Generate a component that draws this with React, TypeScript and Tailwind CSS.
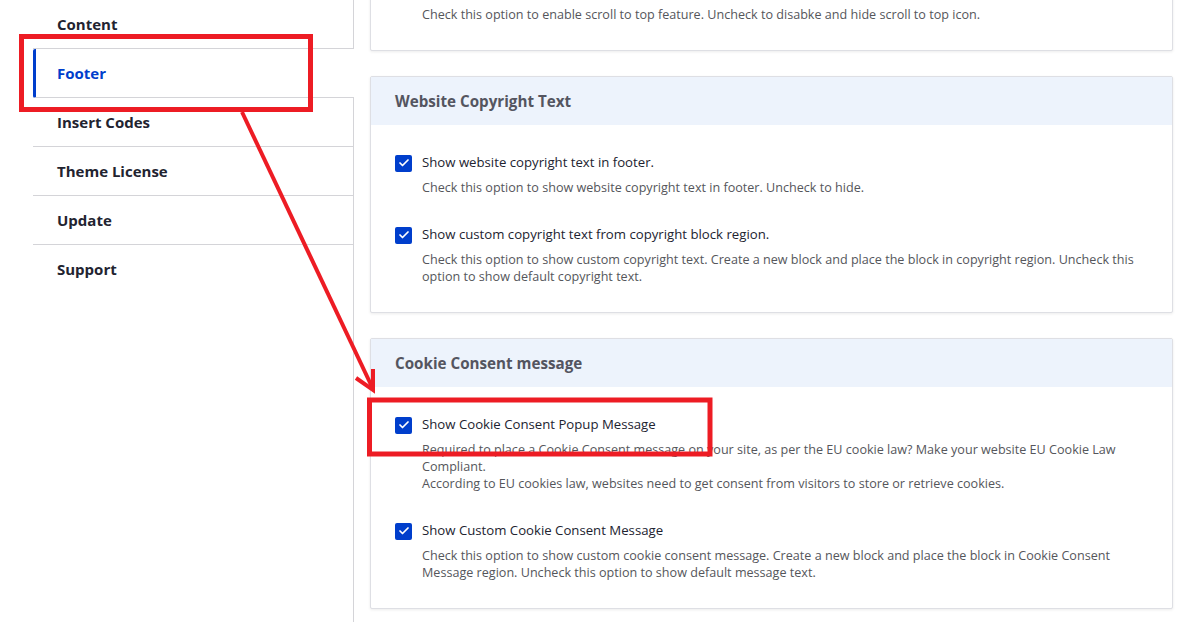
import { Check } from "lucide-react";

const navItems = ["Content", "Footer", "Insert Codes", "Theme License", "Update", "Support"];

type Option = {
  label: string;
  desc: React.ReactNode;
};

const copyrightOptions: Option[] = [
  {
    label: "Show website copyright text in footer.",
    desc: "Check this option to show website copyright text in footer. Uncheck to hide.",
  },
  {
    label: "Show custom copyright text from copyright block region.",
    desc: "Check this option to show custom copyright text. Create a new block and place the block in copyright region. Uncheck this option to show default copyright text.",
  },
];

const cookieOptions: Option[] = [
  {
    label: "Show Cookie Consent Popup Message",
    desc: (
      <>
        Required to place a Cookie Consent message on your site, as per the EU cookie law? Make your website EU Cookie Law
        Compliant.
        <br />
        According to EU cookies law, websites need to get consent from visitors to store or retrieve cookies.
      </>
    ),
  },
  {
    label: "Show Custom Cookie Consent Message",
    desc: "Check this option to show custom cookie consent message. Create a new block and place the block in Cookie Consent Message region. Uncheck this option to show default message text.",
  },
];

function OptionRow({ option, first }: { option: Option; first: boolean }) {
  return (
    <div className={first ? "" : "mt-[29px]"}>
      <label className="flex h-[20px] items-center gap-[10px] text-[13.2px] text-[#222330]">
        <span className="flex h-[17px] w-[17px] flex-none items-center justify-center rounded-[2px] bg-[#003ecc]">
          <Check className="h-[12px] w-[12px] text-white" strokeWidth={3.5} />
        </span>
        {option.label}
      </label>
      <p className="mt-[6px] pl-[27px] text-[12.6px] leading-[17px] text-[#55565b]">{option.desc}</p>
    </div>
  );
}

function Card({ title, options }: { title: string; options: Option[] }) {
  return (
    <section className="mt-[25px] rounded-[2px] border border-[#dedfe4] bg-white shadow-[0_1px_3px_rgba(0,0,0,0.08)]">
      <h3 className="flex h-[48px] items-center bg-[#edf3fc] px-[24px] text-[15.2px] font-bold text-[#545560]">
        {title}
      </h3>
      <div className="px-[24px] pb-[27px] pt-[28px]">
        {options.map((o, i) => (
          <OptionRow key={o.label} option={o} first={i === 0} />
        ))}
      </div>
    </section>
  );
}

export default function App() {
  return (
    <div className="relative flex h-[622px] w-full overflow-hidden bg-white font-['Open_Sans',sans-serif]">
      <aside className="flex-none pl-[33px]">
        <nav className="h-[622px] w-[321px] border-r border-[#d4d4d8]">
          {navItems.map((item) =>
            item === "Footer" ? (
              <div
                key={item}
                className="relative z-10 -mr-px flex h-[49px] items-center rounded-l-[2px] border-b border-l-[3px] border-b-[#d4d4d8] border-l-[#003ecc] bg-white pl-[21px] text-[15px] font-bold text-[#003ecc]"
              >
                {item}
              </div>
            ) : (
              <div
                key={item}
                className={`flex h-[49px] items-center pl-[24px] text-[15px] font-bold text-[#222330] ${
                  item === "Support" ? "" : "border-b border-[#d4d4d8]"
                }`}
              >
                {item}
              </div>
            )
          )}
        </nav>
      </aside>

      <main className="min-w-0 flex-1 pl-[16px] pr-[9px]">
        <section className="-mt-[20px] rounded-[2px] border border-[#dedfe4] bg-white px-[24px] pb-[27px] pt-[25px] shadow-[0_1px_3px_rgba(0,0,0,0.08)]">
          <p className="pl-[27px] text-[12.6px] leading-[17px] text-[#55565b]">
            Check this option to enable scroll to top feature. Uncheck to disabke and hide scroll to top icon.
          </p>
        </section>
        <Card title="Website Copyright Text" options={copyrightOptions} />
        <Card title="Cookie Consent message" options={cookieOptions} />
      </main>

      {/* annotation overlay */}
      <svg className="pointer-events-none absolute left-0 top-0 z-20" width="1182" height="622" viewBox="0 0 1182 622">
        <rect x="21.5" y="36.5" width="289" height="73" fill="none" stroke="#ed1c24" strokeWidth="5" />
        <rect x="369.5" y="400" width="340.5" height="54" fill="none" stroke="#ed1c24" strokeWidth="5" />
        <line x1="242" y1="112" x2="373" y2="389" stroke="#ed1c24" strokeWidth="4" />
        <polyline points="356,378 373,390 373,369" fill="none" stroke="#ed1c24" strokeWidth="4" strokeLinejoin="miter" />
      </svg>
    </div>
  );
}
